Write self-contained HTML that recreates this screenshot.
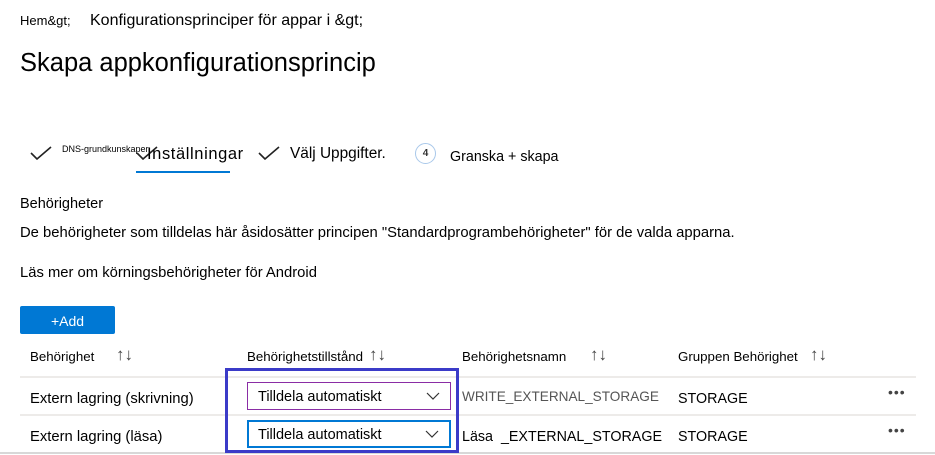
<!DOCTYPE html>
<html><head><meta charset="utf-8"><style>
*{margin:0;padding:0;box-sizing:border-box}
body{width:935px;height:455px;background:#fff;font-family:"Liberation Sans",sans-serif;color:#000;position:relative;overflow:hidden}
.a{position:absolute;white-space:nowrap}
.chk{position:absolute;width:22px;height:14px}
.line{position:absolute;height:2px;background:#edebe9;left:20px;width:896px}
.dd{position:absolute;left:247px;width:204px;height:28px;background:#fff;font-size:14.5px}
.dd span{position:absolute;left:10px;top:6px}
.dd svg{position:absolute;right:10px;top:9px}
.sort{font-size:17px;color:#444}
</style></head><body>
<div class="a" style="left:20px;top:13px;font-size:13px">Hem&amp;gt;</div>
<div class="a" style="left:90px;top:12px;font-size:16px">Konfigurationsprinciper för appar i &amp;gt;</div>
<div class="a" style="left:20px;top:49px;font-size:25.5px">Skapa appkonfigurationsprincip</div>

<svg class="chk" style="left:30px;top:146px" viewBox="0 0 22 14"><path d="M1 7 L7 13 L21 1" stroke="#222" stroke-width="1.6" fill="none"/></svg>
<div class="a" style="left:62px;top:144px;font-size:9px">DNS-grundkunskaper</div>
<svg class="chk" style="left:136px;top:146px" viewBox="0 0 22 14"><path d="M1 7 L7 13 L21 1" stroke="#222" stroke-width="1.6" fill="none"/></svg>
<div class="a" style="left:147px;top:145px;font-size:16.5px;letter-spacing:0.6px">Inställningar</div>
<div class="a" style="left:136px;top:171px;width:94px;height:2px;background:#0078d4"></div>
<svg class="chk" style="left:258px;top:146px" viewBox="0 0 22 14"><path d="M1 7 L7 13 L21 1" stroke="#222" stroke-width="1.6" fill="none"/></svg>
<div class="a" style="left:290px;top:145px;font-size:15.4px">Välj Uppgifter.</div>
<div class="a" style="left:415px;top:143px;width:21px;height:21px;border:1px solid #a9c8ea;border-radius:50%;font-size:10px;font-weight:bold;text-align:center;line-height:19px;color:#333">4</div>
<div class="a" style="left:450px;top:149px;font-size:14.3px">Granska + skapa</div>

<div class="a" style="left:20px;top:196px;font-size:14.5px">Behörigheter</div>
<div class="a" style="left:20px;top:225px;font-size:14.8px">De behörigheter som tilldelas här åsidosätter principen "Standardprogrambehörigheter" för de valda apparna.</div>
<div class="a" style="left:20px;top:265px;font-size:14.8px">Läs mer om körningsbehörigheter för Android</div>

<div class="a" style="left:20px;top:306px;width:95px;height:28px;background:#0078d4;border-radius:2px;color:#fff;font-size:14px;text-align:center;line-height:31px">+Add</div>

<div class="a" style="left:30px;top:349px;font-size:13.3px">Behörighet</div>
<div class="a sort" style="left:116px;top:345px">↑↓</div>
<div class="a" style="left:247px;top:349px;font-size:13.3px">Behörighetstillstånd</div>
<div class="a sort" style="left:369px;top:345px">↑↓</div>
<div class="a" style="left:462px;top:349px;font-size:13.3px">Behörighetsnamn</div>
<div class="a sort" style="left:590px;top:345px">↑↓</div>
<div class="a" style="left:678px;top:349px;font-size:13.3px">Gruppen Behörighet</div>
<div class="a sort" style="left:810px;top:345px">↑↓</div>

<div class="line" style="top:376px"></div>
<div class="line" style="top:414px"></div>
<div class="a" style="left:0;top:452px;width:935px;height:2px;background:#d8d8d8"></div>

<div class="a" style="left:30px;top:391px;font-size:14.8px">Extern lagring (skrivning)</div>
<div class="a" style="left:462px;top:389px;font-size:13.6px;color:#555">WRITE_EXTERNAL_STORAGE</div>
<div class="a" style="left:678px;top:391px;font-size:14.3px">STORAGE</div>
<div class="a" style="left:888px;top:384px;font-size:14px;color:#444;letter-spacing:1px">•••</div>

<div class="a" style="left:30px;top:429px;font-size:14.8px">Extern lagring (läsa)</div>
<div class="a" style="left:462px;top:429px;font-size:14.3px">Läsa &nbsp;_EXTERNAL_STORAGE</div>
<div class="a" style="left:678px;top:429px;font-size:14.3px">STORAGE</div>
<div class="a" style="left:888px;top:422px;font-size:14px;color:#444;letter-spacing:1px">•••</div>

<div class="dd" style="top:382px;border:1px solid #8a2da5"><span>Tilldela automatiskt</span><svg width="14" height="8" viewBox="0 0 14 8"><path d="M1 1 L7 7 L13 1" stroke="#333" stroke-width="1.2" fill="none"/></svg></div>
<div class="dd" style="top:420px;border:2px solid #0078d4"><span style="left:9px;top:5px">Tilldela automatiskt</span><svg width="14" height="8" viewBox="0 0 14 8" style="top:8px"><path d="M1 1 L7 7 L13 1" stroke="#333" stroke-width="1.2" fill="none"/></svg></div>
<div class="a" style="left:225px;top:368px;width:234px;height:85px;border:3px solid #3b3bc8"></div>
</body></html>
